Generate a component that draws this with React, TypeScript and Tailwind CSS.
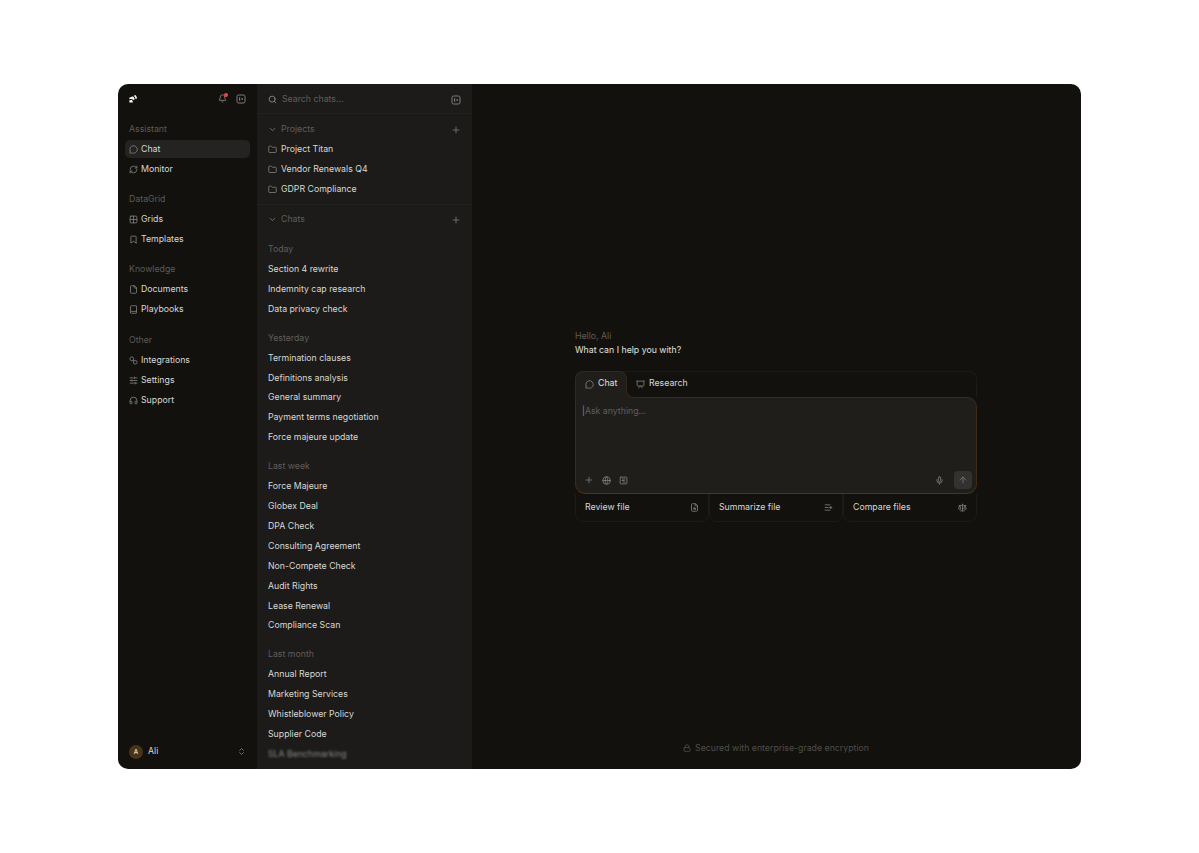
import {
  ArrowUp,
  Bell,
  Book,
  Bookmark,
  ChevronDown,
  ChevronsUpDown,
  File,
  Folder,
  Globe,
  Grid2x2,
  Headphones,
  Lock,
  MessageCircle,
  Mic,
  Plus,
  RefreshCw,
  Scale,
  Search,
  SlidersHorizontal,
  FileSearch,
  ListPlus,
  Presentation,
  SquareChartGantt,
} from "lucide-react"

const PanelIcon = ({ className }: { className?: string }) => (
  <svg width="10" height="10" viewBox="0 0 10 10" fill="none" className={className}>
    <rect x="1" y="1" width="8" height="8" rx="1.6" stroke="currentColor" strokeWidth="1" />
    <path d="M3.6 3.2V6.8" stroke="currentColor" strokeWidth="1.1" />
    <path d="M5.4 4.2H7V5.8H5.4Z" fill="currentColor" />
  </svg>
)

const LinkIcon = ({ size, className }: { size?: number; className?: string }) => (
  <svg width={size} height={size} viewBox="0 0 10 10" fill="none" className={className}>
    <circle cx="3.1" cy="3.1" r="2.1" stroke="currentColor" strokeWidth="0.9" />
    <circle cx="6.9" cy="6.9" r="2.1" stroke="currentColor" strokeWidth="0.9" />
    <path d="M4.2 4.6L5.6 6" stroke="currentColor" strokeWidth="0.9" />
  </svg>
)

const navGroups = [
  { label: "Assistant", items: [{ name: "Chat", icon: MessageCircle, active: true }, { name: "Monitor", icon: RefreshCw }] },
  { label: "DataGrid", items: [{ name: "Grids", icon: Grid2x2 }, { name: "Templates", icon: Bookmark }] },
  { label: "Knowledge", items: [{ name: "Documents", icon: File }, { name: "Playbooks", icon: Book }] },
  { label: "Other", items: [{ name: "Integrations", icon: LinkIcon }, { name: "Settings", icon: SlidersHorizontal }, { name: "Support", icon: Headphones }] },
]

const chatGroups = [
  { label: "Today", items: ["Section 4 rewrite", "Indemnity cap research", "Data privacy check"] },
  { label: "Yesterday", items: ["Termination clauses", "Definitions analysis", "General summary", "Payment terms negotiation", "Force majeure update"] },
  { label: "Last week", items: ["Force Majeure", "Globex Deal", "DPA Check", "Consulting Agreement", "Non-Compete Check", "Audit Rights", "Lease Renewal", "Compliance Scan"] },
  { label: "Last month", items: ["Annual Report", "Marketing Services", "Whistleblower Policy", "Supplier Code"] },
]

const projects = ["Project Titan", "Vendor Renewals Q4", "GDPR Compliance"]

const Logo = () => (
  <svg width="9" height="9" viewBox="0 0 9 9" fill="none">
    <path d="M0.3 8.6V6.6L2.4 5.7C3.4 6.2 3.9 7.2 3.9 8.6Z" fill="#f2f2f0" />
    <path d="M0.3 5.3V3.7L3.9 2.2C5 3 5.6 4.2 5.7 5.4L4.2 6C3.6 5 2.4 4.5 0.3 5.3Z" fill="#f2f2f0" />
    <path d="M4.8 1.8L6.3 1.1C7.4 2.2 8 3.4 8 4.6L6.5 5.1C6.4 4 5.8 2.7 4.8 1.8Z" fill="#f2f2f0" />
  </svg>
)

const Sidebar = () => (
  <aside className="w-[139px] shrink-0 flex flex-col">
    <div className="h-[29px] flex items-center justify-between pl-[11px] pr-[11px]">
      <Logo />
      <div className="flex items-center gap-[9px] text-[#807f7c]">
        <div className="relative">
          <Bell size={9} strokeWidth={2.4} />
          <span className="absolute -top-[1px] -right-[1px] w-[4px] h-[4px] rounded-full bg-[#ef4444]" />
        </div>
        <PanelIcon />
      </div>
    </div>
    <nav className="flex flex-col gap-[10.2px] px-[7px] pt-[6px]">
      {navGroups.map((group) => (
        <div key={group.label}>
          <div className="h-[20px] pt-[1px] flex items-center px-[4px] text-[8.75px] text-[#5c5b58]">{group.label}</div>
          <div className="flex flex-col gap-[2px] py-[1px]">
            {group.items.map((item) => {
              const Icon = item.icon
              return (
                <div
                  key={item.name}
                  className={`h-[18px] pt-[1px] flex items-center gap-[3px] px-[4px] rounded-[5px] text-[8.75px] text-[#d9d8d5] ${item.active ? "bg-[#242321]" : ""}`}
                >
                  <Icon size={9} strokeWidth={2.2} className="text-[#807f7c] shrink-0" />
                  {item.name}
                </div>
              )
            })}
          </div>
        </div>
      ))}
    </nav>
    <div className="mt-auto h-[37px] pt-[2px] flex items-center justify-between pl-[11px] pr-[11px]">
      <div className="flex items-center gap-[5px]">
        <div className="w-[14px] h-[14px] rounded-full bg-[#4a3418] flex items-center justify-center text-[6px] font-semibold text-[#e8d9c0]">A</div>
        <span className="text-[8.75px] text-[#d9d8d5]">Ali</span>
      </div>
      <ChevronsUpDown size={9} strokeWidth={2.2} className="text-[#807f7c]" />
    </div>
  </aside>
)

const ChatPanel = () => (
  <section className="w-[215px] shrink-0 bg-[#1c1b19] flex flex-col overflow-hidden">
    <div className="h-[30px] pt-[2px] shrink-0 flex items-center justify-between pl-[11px] pr-[11px] border-b border-[#222120]">
      <div className="flex items-center gap-[5px] text-[8.75px] text-[#5f5e5b]">
        <Search size={9} strokeWidth={2.4} className="text-[#8a8986]" />
        Search chats...
      </div>
      <PanelIcon className="text-[#807f7c]" />
    </div>
    <div className="pt-[5px] pb-[5px] border-b border-[#222120]">
      <div className="h-[20px] pt-[1px] flex items-center justify-between pl-[11px] pr-[11px] text-[8.75px] text-[#5f5e5b]">
        <div className="flex items-center gap-[4px]">
          <ChevronDown size={9} strokeWidth={2.2} className="text-[#807f7c]" />
          Projects
        </div>
        <Plus size={10} strokeWidth={1.8} className="text-[#807f7c]" />
      </div>
      {projects.map((name) => (
        <div key={name} className="h-[20px] pt-[1px] flex items-center gap-[4px] pl-[11px] text-[8.75px] text-[#d9d8d5]">
          <Folder size={9} strokeWidth={2.2} className="text-[#807f7c]" />
          {name}
        </div>
      ))}
    </div>
    <div className="h-[20px] pt-[1px] mt-[4px] shrink-0 flex items-center justify-between pl-[11px] pr-[11px] text-[8.75px] text-[#5f5e5b]">
      <div className="flex items-center gap-[4px]">
        <ChevronDown size={9} strokeWidth={2.2} className="text-[#807f7c]" />
        Chats
      </div>
      <Plus size={10} strokeWidth={1.8} className="text-[#807f7c]" />
    </div>
    <div className="flex flex-col gap-[9.1px] pt-[10px]">
      {chatGroups.map((group, i) => (
        <div key={group.label} className="shrink-0 pl-[11px]">
          <div className="h-[20px] pt-[1px] flex items-center text-[8.75px] text-[#5f5e5b]">{group.label}</div>
          {group.items.map((name) => (
            <div key={name} className="h-[19.9px] pt-[1px] flex items-center text-[8.75px] text-[#d9d8d5]">{name}</div>
          ))}
          {i === chatGroups.length - 1 && (
            <div className="h-[19.9px] pt-[1px] flex items-center text-[8.75px] text-[#8a8986] blur-[0.8px]">SLA Benchmarking</div>
          )}
        </div>
      ))}
    </div>
  </section>
)

const QuickAction = ({ label, icon: Icon }: { label: string; icon: typeof Plus }) => (
  <div className="flex-1 h-[28px] flex items-center justify-between px-[9px] rounded-b-[8px] border border-t-0 border-[#1c1b18] text-[8.75px] text-[#d9d8d5]">
    {label}
    <Icon size={9} strokeWidth={2.2} className="text-[#807f7c]" />
  </div>
)

const Main = () => (
  <main className="flex-1 flex flex-col items-center pt-[245px] pr-[1px]">
    <div className="w-[402px]">
      <div className="text-[8.75px] leading-[14px] text-[#5f5e5b]">Hello, Ali</div>
      <div className="text-[8.75px] leading-[15px] text-[#e3e2df]">What can I help you with?</div>
      <div className="mt-[13px]">
        <div className="h-[26px] flex rounded-t-[8px] border border-b-0 border-[#1c1b18]">
          <div className="relative z-10 w-[52px] h-[27px] -ml-px -mt-px flex items-center gap-[4px] pl-[9px] pb-[2px] bg-[#1f1e1b] rounded-t-[8px] border border-b-0 border-[#35281a] text-[8.75px] text-[#e3e2df]">
            <MessageCircle size={9} strokeWidth={2.2} className="text-[#807f7c]" />
            Chat
            <div className="absolute left-full bottom-0 w-[8px] h-[8px] bg-[#1f1e1b]">
              <div className="w-full h-full bg-[#12110e] rounded-bl-[8px] border-l border-b border-[#35281a]" />
            </div>
          </div>
          <div className="flex items-center gap-[4px] pl-[9px] pb-[1px] text-[8.75px] text-[#d9d8d5]">
            <Presentation size={9} strokeWidth={2.2} className="text-[#807f7c]" />
            Research
          </div>
        </div>
        <div className="h-[97px] flex flex-col justify-between bg-[#1f1e1b] rounded-b-[10px] rounded-tr-[10px] border border-[#3d2b18] border-b-[#523417] pl-[6px] pr-[4px] pb-[4px] pt-[7px]">
          <div className="text-[8.75px] leading-[12px] text-[#5f5e5b]"><span className="text-[#8a8986]">|</span>Ask anything...</div>
          <div className="flex items-center justify-between">
            <div className="flex items-center gap-[8px] pl-[2px] text-[#807f7c]">
              <Plus size={10} strokeWidth={1.8} />
              <Globe size={9} strokeWidth={2.2} />
              <SquareChartGantt size={9} strokeWidth={2.2} />
            </div>
            <div className="flex items-center gap-[10px] text-[#807f7c]">
              <Mic size={9} strokeWidth={2.2} />
              <div className="w-[18px] h-[18px] rounded-[4px] bg-[#333230] flex items-center justify-center">
                <ArrowUp size={10} strokeWidth={1.8} />
              </div>
            </div>
          </div>
        </div>
        <div className="flex">
          <QuickAction label="Review file" icon={FileSearch} />
          <QuickAction label="Summarize file" icon={ListPlus} />
          <QuickAction label="Compare files" icon={Scale} />
        </div>
      </div>
    </div>
    <div className="mt-auto mb-[14px] flex items-center gap-[4px] text-[8.75px] text-[#4f4e4b]">
      <Lock size={8} strokeWidth={2.4} />
      Secured with enterprise-grade encryption
    </div>
  </main>
)

export default function App() {
  return (
    <div className="min-h-[853px] bg-white pt-[84px] pl-[118px] font-['Inter',sans-serif]">
      <div className="w-[963px] h-[685px] flex rounded-[10px] overflow-hidden bg-[#12110e]">
        <Sidebar />
        <ChatPanel />
        <Main />
      </div>
    </div>
  )
}
